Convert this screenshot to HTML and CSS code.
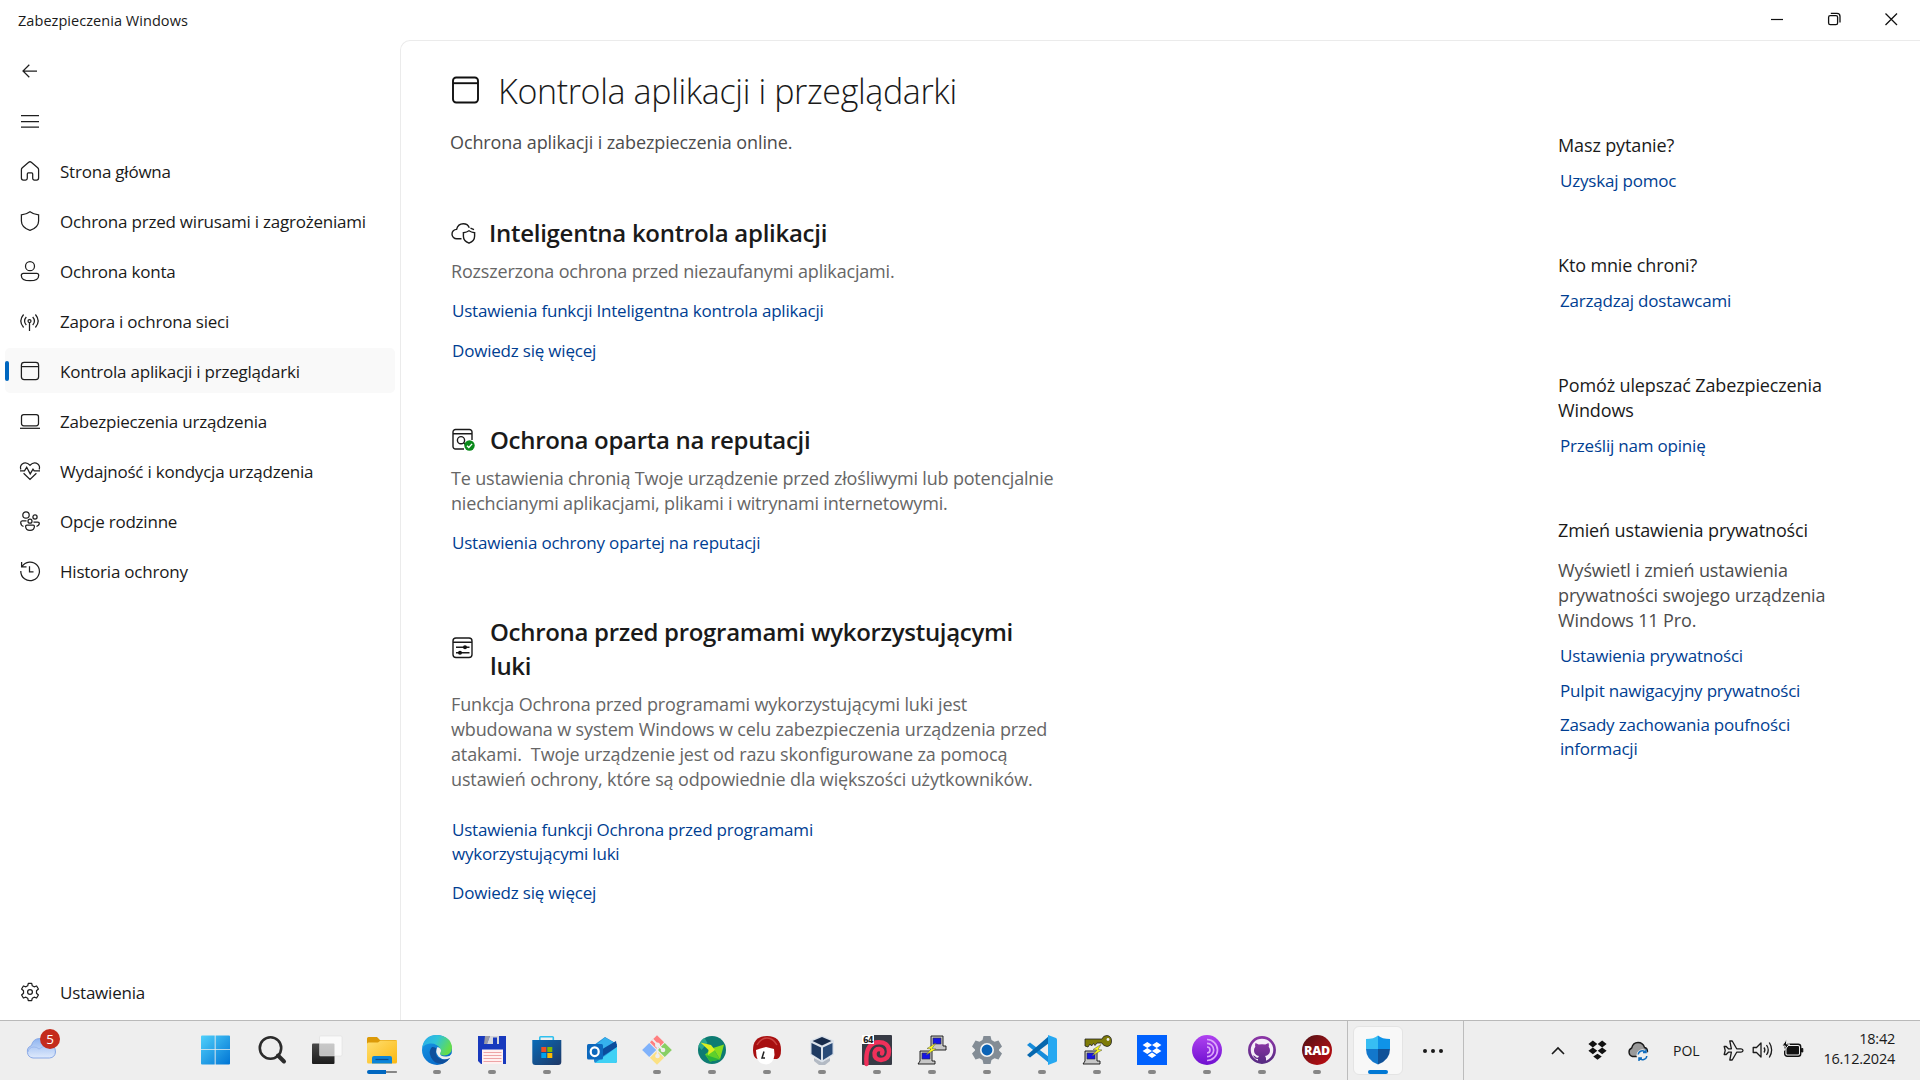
FILE: index.html
```html
<!DOCTYPE html>
<html lang="pl">
<head>
<meta charset="utf-8">
<title>Zabezpieczenia Windows</title>
<link rel="stylesheet" href="styles.css">
</head>
<body>
<div class="window">
  <header class="titlebar">
    <span class="titlebar-text">Zabezpieczenia Windows</span>
    <div class="window-buttons">
      <svg width="57" height="40"><path d="M22 19.5h12" stroke="#111" stroke-width="1.2"/></svg>
      <svg width="57" height="40" fill="none" stroke="#111" stroke-width="1.3"><rect x="22.6" y="15.6" width="9" height="9" rx="1.6"/><path d="M24.8 13.4h6.2a3 3 0 0 1 3 3v6.2"/></svg>
      <svg width="57" height="40"><path d="M22.5 13.5l11.5 11.5M34 13.5L22.5 25" stroke="#111" stroke-width="1.3"/></svg>
    </div>
  </header>
  <div class="body">
    <nav class="sidebar">
      <div class="nav-item"><svg class="ico" viewBox="0 0 20 20"><path d="M17 10H3M9.3 3.8L3 10l6.3 6.2"/></svg></div>
      <div class="nav-item"><svg class="ico" viewBox="0 0 20 20"><path d="M1 4.5h18M1 10.5h18M1 16h18"/></svg></div>
      <div class="nav-item"><svg class="ico" viewBox="0 0 20 20"><path d="M8.7 1.3a2 2 0 0 1 2.6 0l6.4 5.5q.9.8.9 2v8.2a2 2 0 0 1-2 2h-2.200a1.700 1.700 0 0 1-1.700-1.700v-4.400q0-1-1-1h-3.400q-1 0-1 1v4.400a1.700 1.700 0 0 1-1.700 1.700H3.400a2 2 0 0 1-2-2V8.800q0-1.200.9-2z"/></svg><span>Strona główna</span></div>
      <div class="nav-item"><svg class="ico" viewBox="0 0 20 20"><path d="M10 .8q3.300 2.500 8.600 3V10q0 6.500-8.600 9.400Q1.400 16.500 1.400 10V3.800q5.300-.5 8.600-3z"/></svg><span>Ochrona przed wirusami i zagrożeniami</span></div>
      <div class="nav-item"><svg class="ico" viewBox="0 0 20 20"><circle cx="10" cy="5.200" r="4.500"/><path d="M3.300 12.400h13.400a2 2 0 0 1 2 2q0 5.300-8.700 5.300t-8.700-5.300a2 2 0 0 1 2-2z"/></svg><span>Ochrona konta</span></div>
      <div class="nav-item"><svg class="ico" viewBox="0 0 20 20"><circle cx="9.500" cy="10" r="1.500"/><path d="M9.500 11.500V20M3.600 3.500q-5.600 6.500 0 13M15.400 3.500q5.600 6.500 0 13M6.300 6q-3.500 4 0 8M12.700 6q3.500 4 0 8"/></svg><span>Zapora i ochrona sieci</span></div>
      <div class="nav-item selected"><svg class="ico" viewBox="0 0 20 20"><rect x="1.400" y="1.400" width="17.200" height="17.200" rx="2.800"/><path d="M1.400 5.600h17.200"/></svg><span>Kontrola aplikacji i przeglądarki</span></div>
      <div class="nav-item"><svg class="ico" viewBox="0 0 20 20"><rect x="1.500" y="3.600" width="17" height="11.200" rx="2.200"/><path d="M0 17.300h20"/></svg><span>Zabezpieczenia urządzenia</span></div>
      <div class="nav-item"><svg class="ico" viewBox="0 0 20 20"><path d="M.8 8.500Q-.3 5 2.200 3q4-2.700 7.800 1.300Q13.800.3 17.800 3q2.500 2 1.400 5.500M0 9.900h4.500l2.200-3.600 3.500 6.600 2.800-4.700 1.200 1.700H20M3.600 12.200l6.400 6.200 6.400-6.200"/></svg><span>Wydajność i kondycja urządzenia</span></div>
      <div class="nav-item"><svg class="ico" viewBox="0 0 20 20"><circle cx="6" cy="4" r="3.200"/><circle cx="15" cy="6" r="2.100"/><circle cx="10" cy="10.200" r="2"/><path d="M7 14h6.200q1.200 0 1.200 1.200 0 4.200-4.400 4.200t-4.400-4.200Q5.600 14 7 14zM6.500 9.900H2.200Q.7 10 .7 11.500q0 2.800 2.800 4M13.500 11h4.300q1.500 0 1.500 1.300 0 2.200-2.800 3.200"/></svg><span>Opcje rodzinne</span></div>
      <div class="nav-item"><svg class="ico" viewBox="0 0 20 20"><path d="M1.600 1v4.800h4.900M2 5.800A9.300 9.300 0 1 1 .8 10M9.500 5.200v5.600h4"/></svg><span>Historia ochrony</span></div>
      <div class="nav-item settings"><svg class="ico" viewBox="0 0 20 20"><circle cx="10" cy="10" r="2.400"/><path d="M8.300 1.300h3.400l.6 2.500 1.800 1 2.500-.8 1.800 3-1.900 1.800v2.400l1.900 1.800-1.800 3-2.500-.8-1.800 1-.6 2.500H8.300l-.6-2.500-1.800-1-2.500.8-1.800-3 1.900-1.800V8.800L1.600 7l1.800-3 2.500.8 1.800-1z" stroke-linejoin="round"/></svg><span>Ustawienia</span></div>
    </nav>

    <main class="content">
      <div class="column">
        <div class="page-title">
          <svg width="29" height="29" fill="none" stroke="#111" stroke-width="1.900"><rect x="2" y="1.500" width="25" height="25" rx="3.200"/><path d="M2 7.200h25"/></svg>
          <h1>Kontrola aplikacji i przeglądarki</h1>
        </div>
        <p class="subtitle">Ochrona aplikacji i zabezpieczenia online.</p>

        <section>
          <div class="head">
            <svg class="hico" viewBox="0 0 25 24"><path d="M10.500 17.800H5.800a4.700 4.700 0 0 1-.2-9.400Q7 2.800 12.300 2.800q4.400 0 6 3.900M19.500 7.200l3.500 1.500"/><path d="M18 9.800q2.200 1.600 5.600 1.900v3.600q0 4.700-5.600 6.900-5.600-2.200-5.600-6.900v-3.600q3.400-.3 5.600-1.900z"/></svg>
            <h2>Inteligentna kontrola aplikacji</h2>
          </div>
          <p class="desc">Rozszerzona ochrona przed niezaufanymi aplikacjami.</p>
          <a class="link">Ustawienia funkcji Inteligentna kontrola aplikacji</a>
          <a class="link">Dowiedz się więcej</a>
        </section>

        <section>
          <div class="head">
            <svg class="hico" viewBox="0 0 25 24"><path d="M13 21H4.500A2.500 2.500 0 0 1 2 18.500V4a2.500 2.500 0 0 1 2.500-2.500h14A2.500 2.500 0 0 1 21 4v8M2 5.800h19"/><circle cx="10" cy="12.200" r="3.600"/><path d="M12.600 14.800l2.500 2.500"/><circle cx="18.500" cy="17.500" r="5.200" fill="#0a8a1a" stroke="none"/><path d="M16 17.700l1.800 1.800 3.300-3.600" stroke="#fff"/></svg>
            <h2 class="offset">Ochrona oparta na reputacji</h2>
          </div>
          <p class="desc">Te ustawienia chronią Twoje urządzenie przed złośliwymi lub potencjalnie<br>niechcianymi aplikacjami, plikami i witrynami internetowymi.</p>
          <a class="link">Ustawienia ochrony opartej na reputacji</a>
        </section>

        <section>
          <div class="head">
            <svg class="hico" viewBox="0 0 25 24"><rect x="2" y="1" width="19" height="19.500" rx="3"/><path d="M2 5.200h19M5 10.300h13.500M5 15.800h13.500"/><circle cx="14" cy="10.300" r="2" fill="#111" stroke="none"/><circle cx="9" cy="15.800" r="2" fill="#111" stroke="none"/></svg>
            <h2 class="offset">Ochrona przed programami wykorzystującymi<br>luki</h2>
          </div>
          <p class="desc long">Funkcja Ochrona przed programami wykorzystującymi luki jest<br>wbudowana w system Windows w celu zabezpieczenia urządzenia przed<br>atakami.&nbsp; Twoje urządzenie jest od razu skonfigurowane za pomocą<br>ustawień ochrony, które są odpowiednie dla większości użytkowników.</p>
          <a class="link spaced">Ustawienia funkcji Ochrona przed programami<br>wykorzystującymi luki</a>
          <a class="link">Dowiedz się więcej</a>
        </section>
      </div>

      <aside class="aside">
        <section>
          <h3>Masz pytanie?</h3>
          <a class="link">Uzyskaj pomoc</a>
        </section>
        <section>
          <h3>Kto mnie chroni?</h3>
          <a class="link">Zarządzaj dostawcami</a>
        </section>
        <section>
          <h3>Pomóż ulepszać Zabezpieczenia<br>Windows</h3>
          <a class="link">Prześlij nam opinię</a>
        </section>
        <section>
          <h3>Zmień ustawienia prywatności</h3>
          <p>Wyświetl i zmień ustawienia<br>prywatności swojego urządzenia<br>Windows 11 Pro.</p>
          <a class="link">Ustawienia prywatności</a>
          <a class="link">Pulpit nawigacyjny prywatności</a>
          <a class="link tight">Zasady zachowania poufności<br>informacji</a>
        </section>
      </aside>
    </main>
  </div>
</div>

<footer class="taskbar">
  <div class="weather">
    <svg width="34" height="34" viewBox="0 0 34 34">
      <defs>
        <linearGradient id="cl" x1="0" y1="0" x2="0" y2="1"><stop offset="0" stop-color="#8fb4f0"/><stop offset="1" stop-color="#dfeafc"/></linearGradient>
      </defs>
      <path d="M8 31a6.500 6.500 0 0 1-1.500-12.500Q8 11.500 15 11.500q6.500 0 8.500 6Q30.500 18 30.500 25q-.5 5.500-6 6z" fill="url(#cl)" stroke="#88a8e6"/>
      <path d="M3 25q1-5 6-5 3 0 5 2 4-4 9-2" fill="none" stroke="#9db9ee"/>
    </svg>
    <span class="badge">5</span>
  </div>

  <div class="apps">
    <div class="app"><svg viewBox="0 0 30 30"><defs><linearGradient id="w" x1="0" y1="0" x2="1" y2="1"><stop offset="0" stop-color="#4fd0fb"/><stop offset="1" stop-color="#0074d4"/></linearGradient></defs><path d="M0 2q0-1 1-1h12.700v13.700H0zM14.600 1h13.400q1 0 1 1v12.700H14.600zM0 15.600h13.700V30H1q-1 0-1-1zM14.600 15.600H29V29q0 1-1 1H14.600z" fill="url(#w)" transform="translate(-1 -.5)"/></svg></div>
    <div class="app"><svg viewBox="0 0 30 30" fill="none" stroke="#2b2b2b"><circle cx="13.500" cy="13" r="10.700" stroke-width="2.600"/><path d="M21 20.500l6 6" stroke-width="4" stroke-linecap="round"/></svg></div>
    <div class="app"><svg viewBox="0 0 30 30"><defs><linearGradient id="tv" x1="0" y1="0" x2="0" y2="1"><stop offset="0" stop-color="#484848"/><stop offset="1" stop-color="#1c1c1c"/></linearGradient></defs><rect y="8.500" width="22.500" height="20.500" rx="1" fill="url(#tv)"/><rect x="7.500" y="1" width="22.500" height="20" rx="1" fill="#fff" fill-opacity=".7" stroke="#d8d8d8" stroke-width=".5"/></svg></div>
    <div class="app explorer"><svg viewBox="0 0 30 30"><defs><linearGradient id="fo" x1="0" y1="0" x2="1" y2="1"><stop offset="0" stop-color="#ffdf70"/><stop offset="1" stop-color="#fbb812"/></linearGradient></defs><path d="M0 3.500Q0 2 1.500 2H10l3 3h15.500Q30 5 30 6.500V12H0z" fill="#dc9a08"/><path d="M0 9q0-1.500 1.500-1.500H11L13.500 5.500H30V27q0 1.500-1.500 1.500h-27Q0 28.500 0 27z" fill="url(#fo)"/><path d="M5 28.500V23q0-2 2-2h16q2 0 2 2v5.500z" fill="#0b84d8"/><path d="M8.500 24.500h13" stroke="#0a4d8c" stroke-width="1.200"/></svg><i class="dot active"></i></div>
    <div class="app"><svg viewBox="0 0 30 30"><defs><linearGradient id="e1" x1="0" y1="0" x2="1" y2=".4"><stop offset="0" stop-color="#2aa8ee"/><stop offset=".5" stop-color="#2fc4d8"/><stop offset="1" stop-color="#64dd4c"/></linearGradient><linearGradient id="e2" x1="0" y1="0" x2=".6" y2="1"><stop offset="0" stop-color="#1a9ee8"/><stop offset="1" stop-color="#0869c9"/></linearGradient></defs><circle cx="15" cy="15" r="15" fill="url(#e2)"/><path d="M.3 12.500Q2 0 15 0q14 1 15 12.500 0 7-7.500 8-5-.3-4.500-2.500 1.500-2 .5-4Q15 8 8 8.500q-5 .5-7.700 4z" fill="url(#e1)"/><path d="M10 12q-4 4-1 10.500 4 7.300 12 6 5-2 7.500-6Q20 27 15.500 22q-3-4-.5-8-2.500-2.500-5-2z" fill="#0f4f9c"/><path d="M15.500 12q4 1.500 3.500 4.300-.9 1.700-1 2.200.5 3.500 6.500 3 4-.5 5.500-3v4l-2 .5q-7 3-11.500-1.500-4-5-1-9.500z" fill="#eee"/></svg><i class="dot"></i></div>
    <div class="app"><svg viewBox="0 0 30 30"><path d="M1 1h28v28H4l-3-3z" fill="#1839bd"/><path d="M8 1h5l-3 8H7z" fill="#9a9aa4"/><path d="M13 1h9v8H10z" fill="#d5d5da"/><path d="M16 2.500h4V9h-4z" fill="#1839bd"/><path d="M5 14.500h21V29H5z" fill="#fff0f0"/><path d="M6.500 17.500h18M6.500 20.500h18M6.500 23.500h18M6.500 26.500h18" stroke="#eda4a6" stroke-width="1"/></svg><i class="dot"></i></div>
    <div class="app"><svg viewBox="0 0 30 30"><defs><linearGradient id="st" x1="0" y1="0" x2="1" y2="1"><stop offset="0" stop-color="#0a6cb8"/><stop offset="1" stop-color="#1e3765"/></linearGradient></defs><g transform="translate(-.7 0)"><path d="M8.500 6V2.500q0-.8.8-.8h11.900q.8 0 .8.800V6" fill="none" stroke="#2fc0ee" stroke-width="1.600"/><path d="M1 5h29v22q0 3-3 3H4q-3 0-3-3z" fill="url(#st)"/><path d="M10 12h5v5h-5z" fill="#f25022"/><path d="M16 12h5v5h-5z" fill="#7fba00"/><path d="M10 18h5v5h-5z" fill="#00a4ef"/><path d="M16 18h5v5h-5z" fill="#ffb900"/></g></svg><i class="dot"></i></div>
    <div class="app"><svg viewBox="0 0 30 30"><path d="M7 10L18 2l12 7v17q0 2-2 2H9q-2 0-2-2z" fill="#1e8ad4"/><path d="M10 9l8-6.500 9 5L14 17z" fill="#35b1ed"/><path d="M12 16L29 6l1 6-14 9z" fill="#0b4c9c"/><path d="M8 28L30 12v14q0 2-2 2z" fill="#3fd1f5"/><rect y="9" width="16" height="15.500" rx="1.500" fill="#0c68bd"/><ellipse cx="7.700" cy="16.700" rx="4" ry="4.400" fill="none" stroke="#fff" stroke-width="2.200"/></svg></div>
    <div class="app"><svg viewBox="0 0 30 30"><g transform="rotate(45 15 15)"><path d="M4.500 4.500h10v10h-10z" fill="#ff7f80"/><path d="M15.500 4.500h10v10h-10z" fill="#88cf63"/><path d="M4.500 15.500h10v10h-10z" fill="#80b2fb"/><path d="M15.500 15.500h10v10h-10z" fill="#fbe184"/></g><path d="M10.500 4.500l5 5v13M15.500 9.500l5.500 5.500" stroke="#eee" stroke-width="1.800" fill="none"/><circle cx="15.500" cy="10" r="2.500" fill="#eee"/><circle cx="21" cy="15" r="2.300" fill="#eee"/><circle cx="15.500" cy="21" r="2.300" fill="#eee"/></svg><i class="dot"></i></div>
    <div class="app"><svg viewBox="0 0 30 30"><circle cx="15" cy="15" r="14" fill="#0d7b72"/><path d="M1.500 11q2-6 6-8l3 5-6 7z" fill="#29a68e"/><path d="M16 13l11-3.500-4 15z" fill="#85dd1e"/><path d="M8 19.500l8-6.500 7 11.500-10 2z" fill="#5fd02a"/><path d="M3.500 7.500L14 10l4 5-7 5 .5-5z" fill="#dcee20"/><path d="M9 20l14 4.500-10 2z" fill="#28b33b"/></svg><i class="dot"></i></div>
    <div class="app"><svg viewBox="0 0 30 30"><path d="M1 15Q1 1 15 1t14 14q0 8-4 9H5q-4-2-4-9z" fill="#a80f10"/><path d="M4 15q7-2.500 10-3l8 2 .5 6q-1 9-8.500 9.500Q6 29 4.500 21z" fill="#fff"/><path d="M5 10Q9 3 15 3t10 7" stroke="#c94340" stroke-width="1.500" fill="none"/><path d="M12 16.500l-2 6.500h3" stroke="#222" fill="none" stroke-width="1.500"/></svg><i class="dot"></i></div>
    <div class="app"><svg viewBox="0 0 30 30"><path d="M7 23l8 4 8-4v3l-5 4h-6l-5-4z" fill="#b3bac4"/><path d="M15 .5l12 5v14l-12 8-12-8v-14z" fill="#dae1ea"/><path d="M15 2l9.500 4L15 10.500 5.500 6z" fill="#172b4b"/><path d="M4.500 8l9.500 4.500V25L4.500 19z" fill="#1e3a62"/><path d="M25.500 8L16 12.500V25l9.500-6z" fill="#294b78"/></svg><i class="dot"></i></div>
    <div class="app"><svg viewBox="0 0 30 30"><rect width="30" height="30" rx="1" fill="#373b45"/><path d="M4.500 29Q3 10 14 7.500q13-1.500 13 9 0 8-8 8.500-7-.5-6.500-7 1-4.500 5-4 4 .8 2.500 4.500" fill="none" stroke="#f0305a" stroke-width="4.400" stroke-linecap="round"/><rect width="12" height="9" fill="#fff"/><text x="1" y="7.500" class="t64">64</text></svg><i class="dot"></i></div>
    <div class="app"><svg viewBox="0 0 30 30"><path d="M14 1h12v10h3v4H14z" fill="#c7c7c7" stroke="#111" stroke-width=".9"/><path d="M16 3h8v6h-8z" fill="#1616e6" stroke="#333" stroke-width=".6"/><path d="M3 16h12v10h3v3H1l2-3z" fill="#c7c7c7" stroke="#111" stroke-width=".9"/><path d="M5 18h8v6H5z" fill="#1616e6" stroke="#333" stroke-width=".6"/><path d="M19 8l-9 5.500 4 .5-5 6 10-6-4-.5z" fill="#ffff18" stroke="#554" stroke-width=".5"/></svg><i class="dot"></i></div>
    <div class="app"><svg viewBox="0 0 30 30"><path d="M11.500 1h7l1 4 3 1.700 4-1.200L30 11.500l-3 3v1l3 3-3.500 6-4-1.200-3 1.700-1 4h-7l-1-4-3-1.700-4 1.200L0 18.500l3-3v-1l-3-3 3.500-6 4 1.200 3-1.700z" fill="#838c95"/><circle cx="15" cy="15" r="6.200" fill="#0b63b6" stroke="#f5f5f5" stroke-width="1.600"/></svg><i class="dot"></i></div>
    <div class="app"><svg viewBox="0 0 30 30"><path d="M0 10l3-2.500L22 22v6z" fill="#168cdb"/><path d="M0 20l3 2.500L22 8V1z" fill="#0567ae"/><path d="M21 0l8 3q1 .5 1 1.500v21q0 1-1 1.500l-8 3z" fill="#26a8f1"/></svg><i class="dot"></i></div>
    <div class="app"><svg viewBox="0 0 30 30"><path d="M3 16h12v10h3v3H1l2-3z" fill="#c7c7c7" stroke="#111" stroke-width=".9"/><path d="M5 18h8v6H5z" fill="#1616e6" stroke="#333" stroke-width=".6"/><path d="M3 4h17q1-3.500 5-3.500 4.500.5 4.500 5.500t-4.500 5.500Q21 11 20 8h-5l-2 2.500-1.500-2-2 2.500L8 9l-2 3-3-1z" fill="#7e7b08" stroke="#222" stroke-width=".8"/><circle cx="26" cy="4.500" r="1.400" fill="#eee"/><path d="M19 9.500l-8 5 4 .5-5 6 10-6-4-.5z" fill="#ffff18" stroke="#554" stroke-width=".5"/></svg><i class="dot"></i></div>
    <div class="app"><svg viewBox="0 0 30 30"><path d="M0 0h30v30H0z" fill="#0061fe"/><path d="M10.300 7l4.700 3-4.700 3-4.700-3zM19.700 7l4.700 3-4.700 3-4.700-3zM10.300 13l4.700 3-4.700 3-4.700-3zM19.700 13l4.700 3-4.700 3-4.700-3zM15 17.500l4.300 2.700L15 23l-4.300-2.800z" fill="#fff"/></svg><i class="dot"></i></div>
    <div class="app"><svg viewBox="0 0 30 30"><defs><linearGradient id="to" x1="0" y1="0" x2="0" y2="1"><stop offset="0" stop-color="#b043f0"/><stop offset="1" stop-color="#6f0fd0"/></linearGradient></defs><circle cx="15" cy="15" r="15" fill="url(#to)"/><g fill="none" stroke="#dca7fb" stroke-width="1.700"><path d="M15 4.500a10.500 10.500 0 0 1 0 21M15 8.300a6.700 6.700 0 0 1 0 13.400M15 12a3 3 0 0 1 0 6"/></g></svg><i class="dot"></i></div>
    <div class="app"><svg viewBox="0 0 30 30"><defs><linearGradient id="gh" x1="0" y1="0" x2="0" y2="1"><stop offset="0" stop-color="#8a35a5"/><stop offset="1" stop-color="#582b83"/></linearGradient></defs><circle cx="15" cy="15" r="12.600" fill="#f5eff8" stroke="url(#gh)" stroke-width="2.700"/><path d="M8.500 8l3.200 1.600q3.300-.7 6.600 0L21.500 8q.8 2 .2 3.800 1.600 1.800 1.300 4.200-.5 4.200-5 5 1 1 1 2.500V27h-8v-3q-3 .5-4-2l-1.200-1.500q2-.3 3 1.500 1 1 2.400.5.200-1 .8-1.500-4.500-.8-5-5-.3-2.400 1.300-4.200-.6-1.800.2-3.800z" fill="url(#gh)"/></svg><i class="dot"></i></div>
    <div class="app"><svg viewBox="0 0 30 30"><defs><linearGradient id="ra" x1="0" y1="0" x2="1" y2="1"><stop offset="0" stop-color="#4d1014"/><stop offset=".5" stop-color="#8c1015"/><stop offset="1" stop-color="#c20a10"/></linearGradient></defs><circle cx="15" cy="15" r="15" fill="url(#ra)"/><text x="15" y="19.500" class="trad">RAD</text></svg><i class="dot"></i></div>
  </div>

  <div class="current">
    <div class="app focused"><svg viewBox="0 0 30 30"><path d="M15 .5Q19 4 27 4v10H15z" fill="#0f93e8"/><path d="M15 .5Q11 4 3 4v10h12z" fill="#37bdf3"/><path d="M3 14h12v15.500Q3 25 3 14z" fill="#1277cc"/><path d="M27 14H15v15.500Q27 25 27 14z" fill="#0f5198"/></svg><i class="dot wide"></i></div>
    <svg class="more" width="22" height="6"><circle cx="3" cy="3" r="2" /><circle cx="11" cy="3" r="2"/><circle cx="19" cy="3" r="2"/></svg>
  </div>

  <div class="tray">
    <svg class="t-chev" width="14" height="10" fill="none" stroke="#1a1a1a" stroke-width="1.600"><path d="M1 8l6-6 6 6"/></svg>
    <svg class="t-box" width="19" height="20" viewBox="5.400 6.500 19.200 17.500" preserveAspectRatio="none"><path d="M10.300 7l4.500 3-4.500 3-4.500-3zM19.700 7l4.500 3-4.500 3-4.500-3zM10.300 13l4.500 3-4.500 3-4.500-3zM19.700 13l4.500 3-4.500 3-4.500-3zM15 18.500l4.300 2.500L15 23.800l-4.300-2.800z" fill="#111"/></svg>
    <svg class="t-cloud" width="22" height="20"><path d="M5.500 15.500a4.500 4.500 0 0 1-.8-8.500Q6 1.500 11 1.500q5 0 6.500 5 3 .7 3 4-.5 4.500-4 5z" fill="#9a9a9a" stroke="#1a1a1a" stroke-width="1.400"/><circle cx="15.500" cy="14.200" r="6" fill="#eee"/><path d="M11.200 13.500a4.300 4.300 0 0 1 7.500-2.300M19.800 15a4.300 4.300 0 0 1-7.500 2.300M19 8.500v3h-3M12 20v-3h3" fill="none" stroke="#0f6cbd" stroke-width="1.500"/></svg>
    <span class="lang">POL</span>
    <svg class="t-plane" width="21" height="21" fill="none" stroke="#1a1a1a" stroke-width="1.300" stroke-linejoin="round"><path d="M1.200 6.500h2l2.200 2.300h3L6.800 1h2.400l4.500 7.800H18q2 .3 2 1.700t-2 1.700h-4.300L9.200 20H6.800l1.600-7.800h-3l-2.200 2.300h-2l1-4z"/></svg>
    <svg class="t-vol" width="22" height="20" fill="none" stroke="#1a1a1a" stroke-width="1.300" stroke-linejoin="round"><path d="M1.200 7.500h3.300L9 3v14l-4.500-4.500H1.200zM12 7.500q1.800 2.500 0 5M14.500 5q3.500 5 0 10"/><path d="M17.300 2.500q4.700 7.500 0 15" /></svg>
    <svg class="t-bat" width="21" height="20"><rect x="1.700" y="4.200" width="16" height="12" rx="2.500" fill="none" stroke="#111" stroke-width="1.400"/><rect x="3.500" y="6" width="12.500" height="8.500" rx="1" fill="#111"/><path d="M18.500 8.500h1.300v3.500h-1.300z" fill="#111" stroke="#111"/><path d="M3.800-1L-1 6h3.300l-1 4.500L6.500 4h-3z" fill="#111" stroke="#eee" stroke-width="1"/></svg>
    <div class="clock"><span>18:42</span><span>16.12.2024</span></div>
  </div>
</footer>
</body>
</html>
```
FILE: styles.css
```css
* { box-sizing: border-box; margin: 0; padding: 0; }

body {
  width: 1920px;
  height: 1080px;
  overflow: hidden;
  display: flex;
  flex-direction: column;
  background: #fff;
  color: #1a1a1a;
  font-family: "Open Sans", "Noto Sans", sans-serif;
  font-size: 17px;
  letter-spacing: -0.2px;
  white-space: nowrap;
}

svg { display: block; flex: none; overflow: visible; }

.window { height: 1020px; display: flex; flex-direction: column; }

/* Title bar */
.titlebar { height: 40px; flex: none; display: flex; justify-content: space-between; }
.titlebar-text { padding-left: 18px; font-size: 14.5px; line-height: 41px; letter-spacing: 0.05px; }
.window-buttons { display: flex; }

.body { flex: 1; display: flex; min-height: 0; }

/* Sidebar */
.sidebar {
  width: 400px;
  padding: 8px 5px 6px;
  display: flex;
  flex-direction: column;
  gap: 5px;
}
.nav-item {
  position: relative;
  height: 45px;
  flex: none;
  display: flex;
  align-items: center;
  gap: 20px;
  padding-left: 15px;
  border-radius: 5px;
}
.nav-item span { padding-top: 2px; letter-spacing: -0.22px; }
.ico { width: 20px; height: 20px; fill: none; stroke: #1f1f1f; stroke-width: 1.25; }
.nav-item.selected { background: #f9f9f9; }
.nav-item.selected::before {
  content: "";
  position: absolute;
  left: 0;
  top: 13px;
  width: 4px;
  height: 20px;
  border-radius: 2px;
  background: #0067c0;
}
.nav-item.settings { margin-top: auto; }

/* Content */
.content {
  flex: 1;
  display: flex;
  border: solid #ebebeb;
  border-width: 1px 0 0 1px;
  border-top-left-radius: 10px;
  padding: 27px 0 0 50px;
}
.column { width: 1107px; }
.page-title { display: flex; gap: 18px; }
.page-title svg { margin-top: 8px; }
h1 { font-size: 34px; font-weight: 300; line-height: 46px; letter-spacing: -0.36px; }
.subtitle { margin: 16px 0 61px -1px; font-size: 18px; line-height: 25px; letter-spacing: -0.1px; color: #4c4c4c; }

.column section { margin-bottom: 60px; display: flex; flex-direction: column; }
.column .link { padding-left: 1px; }
.head { display: flex; align-items: center; gap: 13px; }
.hico { width: 25px; height: 24px; fill: none; stroke: #1a1a1a; stroke-width: 1.4; }
h2 { font-size: 24px; font-weight: 600; line-height: 34px; letter-spacing: -0.28px; }
h2.offset { padding-left: 1px; letter-spacing: -0.3px; }
.desc { margin: 9px 0 -1px; font-size: 18px; line-height: 25px; letter-spacing: -0.18px; color: #666; }
.desc.long { letter-spacing: -0.13px; }
.link { margin-top: 16px; line-height: 24px; color: #003e92; }
.link.spaced { margin-top: 27px; }
.link.spaced + .link { margin-top: 15px; }

.aside { padding-top: 65px; display: flex; flex-direction: column; gap: 60px; }
.aside section { display: flex; flex-direction: column; }
.aside h3, .aside p { font-size: 18px; font-weight: 400; line-height: 25px; letter-spacing: -0.13px; }
.aside p { margin-top: 15px; color: #4c4c4c; }
.aside .link { margin: 11px 0 0 2px; }
.aside .link.tight { margin-top: 10px; }

/* Taskbar */
.taskbar { height: 60px; display: flex; background: #eee; border-top: 1px solid #b9b9b9; }
.weather { position: relative; width: 189px; padding: 6px 0 0 25px; }
.badge {
  position: absolute;
  left: 40px;
  top: 8px;
  width: 20px;
  height: 20px;
  border-radius: 50%;
  background: #c42b1c;
  color: #fff;
  font-size: 13.5px;
  line-height: 20px;
  text-align: center;
}
.apps { display: flex; }
.app {
  width: 55px;
  height: 59px;
  padding-top: 14px;
  display: flex;
  flex-direction: column;
  align-items: center;
  gap: 5px;
}
.app svg { width: 30px; height: 30px; }
.dot { width: 8px; height: 4px; border-radius: 2px; background: #868686; }
.dot.active {
  width: 30px;
  background: linear-gradient(90deg, #0067c0 62%, transparent 62%), linear-gradient(transparent 25%, #868686 25%, #868686 75%, transparent 75%);
}
.dot.wide { width: 20px; background: #0078d4; }
.t64 { font: 700 8px "DejaVu Sans", sans-serif; letter-spacing: -0.5px; fill: #222; }
.trad { font: 800 12.5px "Open Sans", sans-serif; letter-spacing: -0.3px; fill: #fff; text-anchor: middle; }

.current {
  width: 117px;
  margin-left: 3px;
  display: flex;
  align-items: center;
  border: solid #bcbcbc;
  border-width: 0 1px;
  padding-left: 5px;
}
.app.focused {
  width: 50px;
  height: 49px;
  padding-top: 8px;
  border: 1px solid #e4e4e4;
  border-radius: 6px;
  background: #f8f8f8;
}
.more { margin-left: 19px; fill: #1a1a1a; }

.tray { flex: 1; display: flex; align-items: center; }
.t-chev { margin-left: 87px; }
.t-box { margin-left: 23px; margin-top: -2px; }
.t-cloud { margin-left: 20px; }
.lang { margin: 0 0 0 24px; font-size: 14px; letter-spacing: 0; }
.t-plane { margin-left: 23px; margin-top: -1px; }
.t-vol { margin-left: 8px; margin-top: -1px; }
.t-bat { margin-left: 9px; margin-top: -1px; }
.clock {
  margin: -3px 25px 0 auto;
  display: flex;
  flex-direction: column;
  align-items: flex-end;
  font-size: 14.5px;
  line-height: 20px;
  letter-spacing: -0.24px;
}
```
